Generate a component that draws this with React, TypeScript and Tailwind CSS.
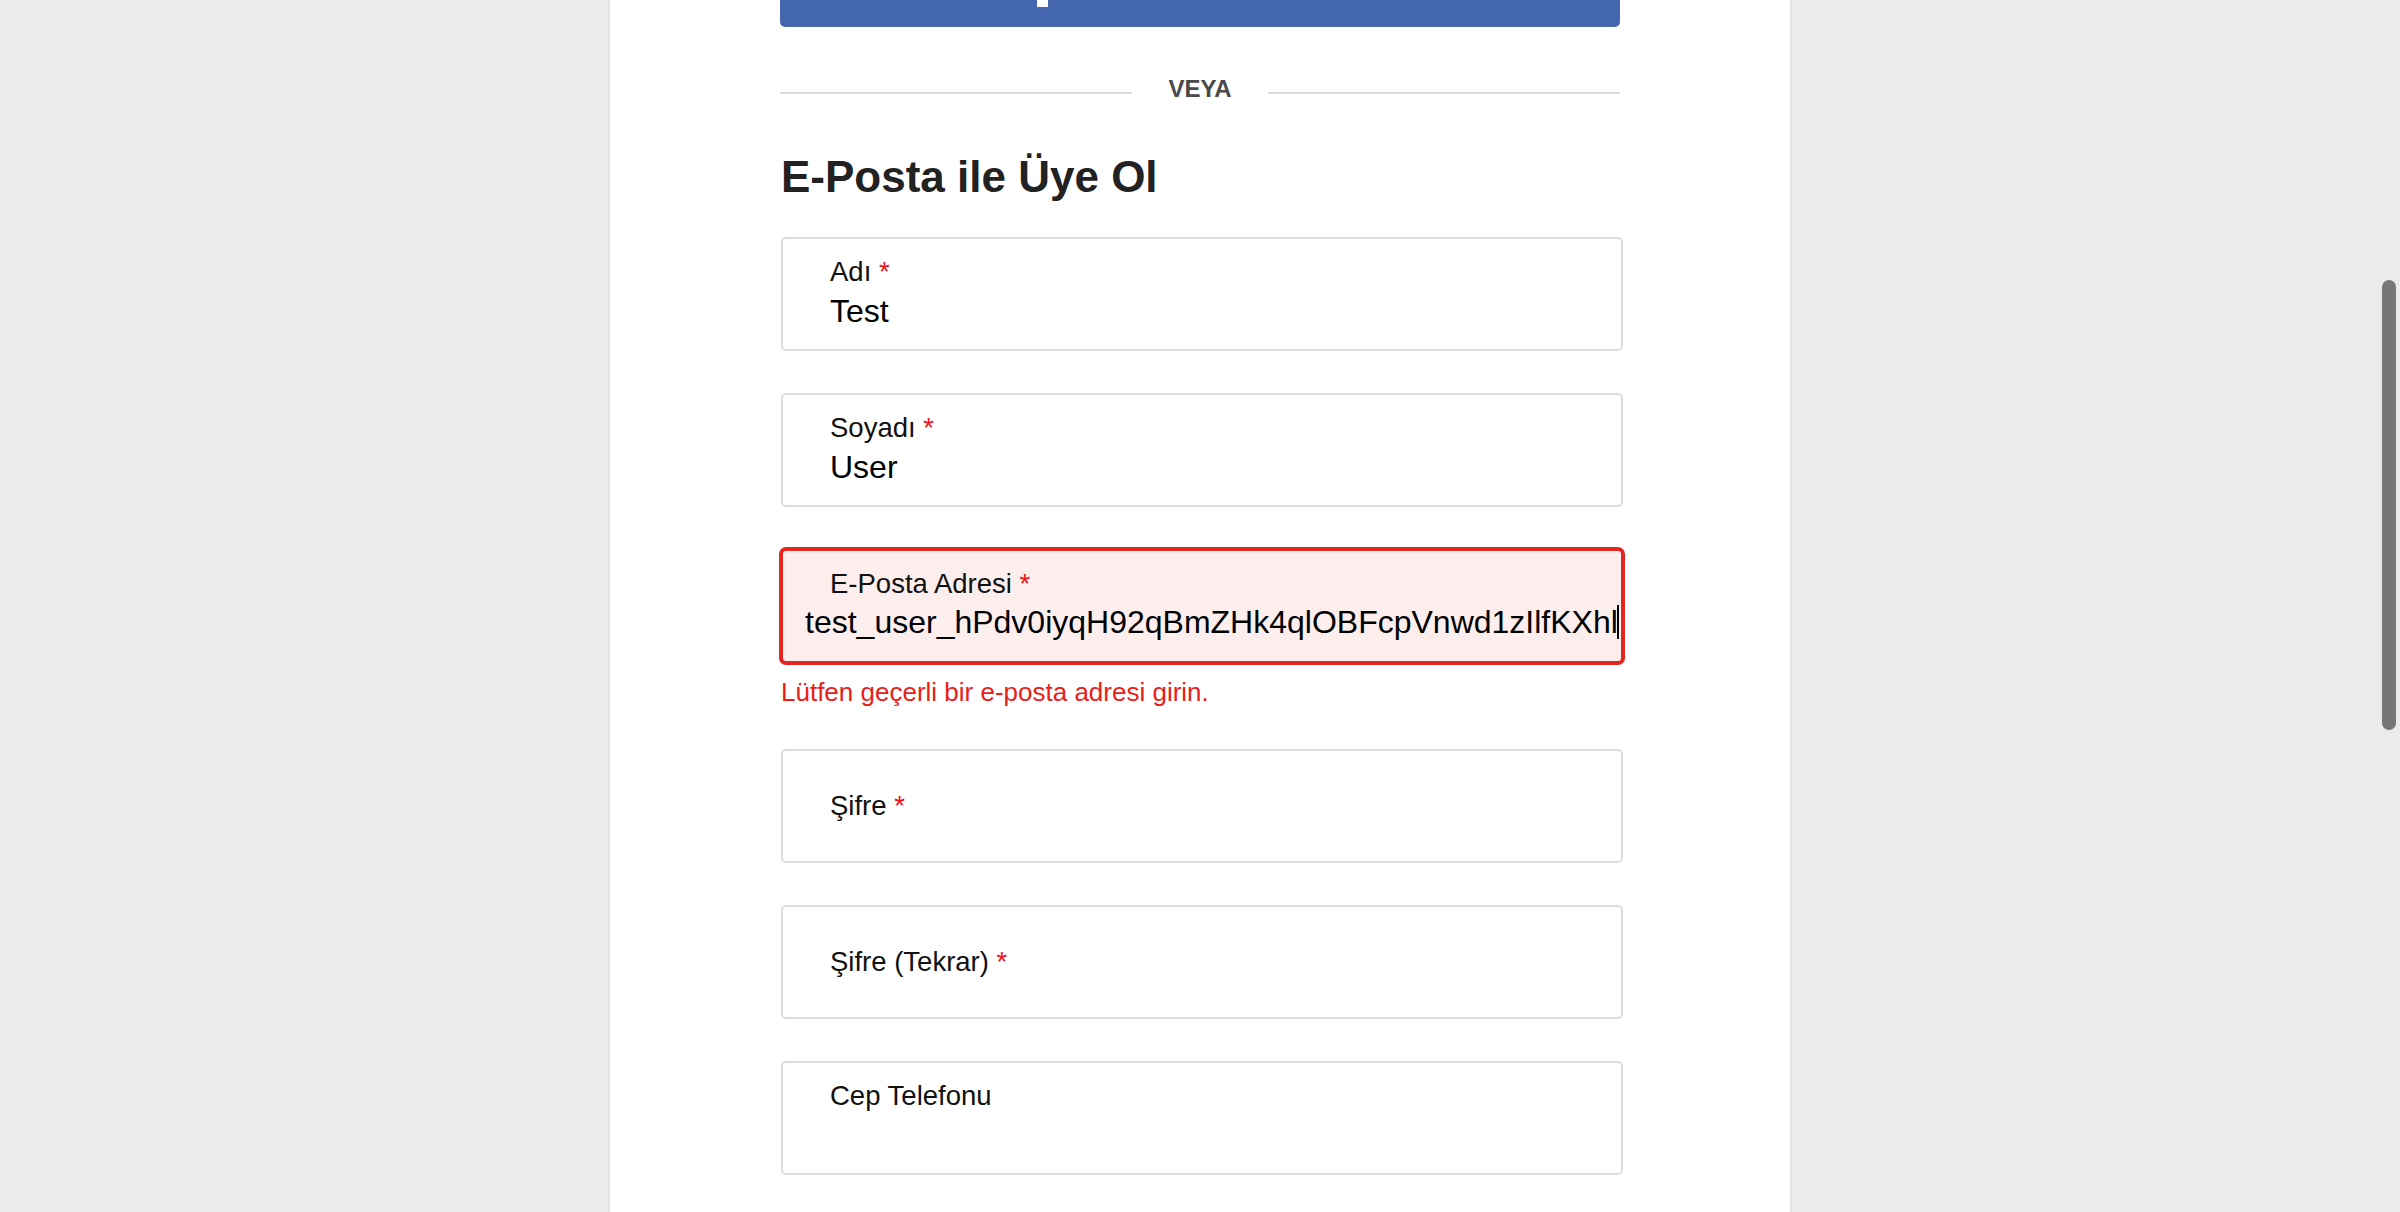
import React from "react";

const font = { fontFamily: '"Liberation Sans", Arial, Helvetica, sans-serif' };

function Req() {
  return <span className="text-[#e8141b]"> *</span>;
}

function FilledField({ label, value, required = true }: { label: string; value?: string; required?: boolean }) {
  return (
    <div className="h-[114px] w-[842px] rounded-[5px] border-2 border-[#dddddd] bg-white pl-[47px]">
      <div className="pt-[19px] text-[27.5px] leading-[28px] text-[#111]">
        {label}
        {required && <Req />}
      </div>
      {value !== undefined && (
        <div className="mt-[9px] text-[32px] leading-[32px] text-black">{value}</div>
      )}
    </div>
  );
}

function EmptyField({ label }: { label: string }) {
  return (
    <div className="flex h-[114px] w-[842px] items-center rounded-[5px] border-2 border-[#dddddd] bg-white pl-[47px]">
      <div className="text-[27.5px] leading-[28px] text-[#111]">
        {label}
        <Req />
      </div>
    </div>
  );
}

export default function App() {
  return (
    <div style={font} className="relative h-[1212px] w-full overflow-hidden bg-[#ebebeb]">
      <div className="mx-auto h-full w-[1180px] bg-white pl-[171px] shadow-[0_0_4px_rgba(0,0,0,0.12)]">
        {/* Facebook button (cut off at top) */}
        <div className="relative ml-[-1px] h-[27px] w-[840px] overflow-hidden rounded-b-[5px] bg-[#4467b0]">
          <svg className="absolute left-[257px] top-0" width="11" height="7" viewBox="0 0 11 7">
            <rect x="0" y="0" width="11" height="7" fill="#ffffff" />
          </svg>
        </div>

        {/* Divider */}
        <div className="ml-[-1px] mt-[50px] flex w-[840px] items-start">
          <div className="mt-[15px] h-[2px] flex-1 bg-[#dddddd]" />
          <div className="px-[36px] text-[24px] font-bold leading-[24px] text-[#4a4a4a]">VEYA</div>
          <div className="mt-[15px] h-[2px] flex-1 bg-[#dddddd]" />
        </div>

        {/* Heading */}
        <h1 className="mt-[54px] text-[44px] font-bold leading-[44px] text-[#222222]">E-Posta ile Üye Ol</h1>

        <div className="mt-[38px] flex flex-col">
          <FilledField label="Adı" value="Test" />
          <div className="mt-[42px]">
            <FilledField label="Soyadı" value="User" />
          </div>

          {/* Email with error */}
          <div className="mt-[42px] h-[114px] w-[842px] overflow-hidden rounded-[5px] border-2 border-[#e3261f] bg-[#fdeeee] shadow-[0_0_0_2px_#e3261f]">
            <div className="pl-[47px] pt-[19px] text-[27.5px] leading-[28px] text-[#111]">
              E-Posta Adresi
              <Req />
            </div>
            <div className="mt-[7px] flex items-center whitespace-nowrap pl-[22px]">
              <span className="text-[32px] leading-[34px] text-black">test_user_hPdv0iyqH92qBmZHk4qlOBFcpVnwd1zIlfKXhl</span>
              <span className="ml-[-1px] h-[34px] w-[2px] bg-black" />
            </div>
          </div>
          <div className="mt-[16px] text-[26px] leading-[26px] text-[#e8201a]">Lütfen geçerli bir e-posta adresi girin.</div>

          <div className="mt-[44px]">
            <EmptyField label="Şifre" />
          </div>
          <div className="mt-[42px]">
            <EmptyField label="Şifre (Tekrar)" />
          </div>
          <div className="mt-[42px]">
            <FilledField label="Cep Telefonu" required={false} />
          </div>
        </div>
      </div>

      {/* Scrollbar thumb overlay */}
      <div className="absolute right-[4px] top-[280px] h-[450px] w-[14px] rounded-full bg-[#777777]" />
    </div>
  );
}
